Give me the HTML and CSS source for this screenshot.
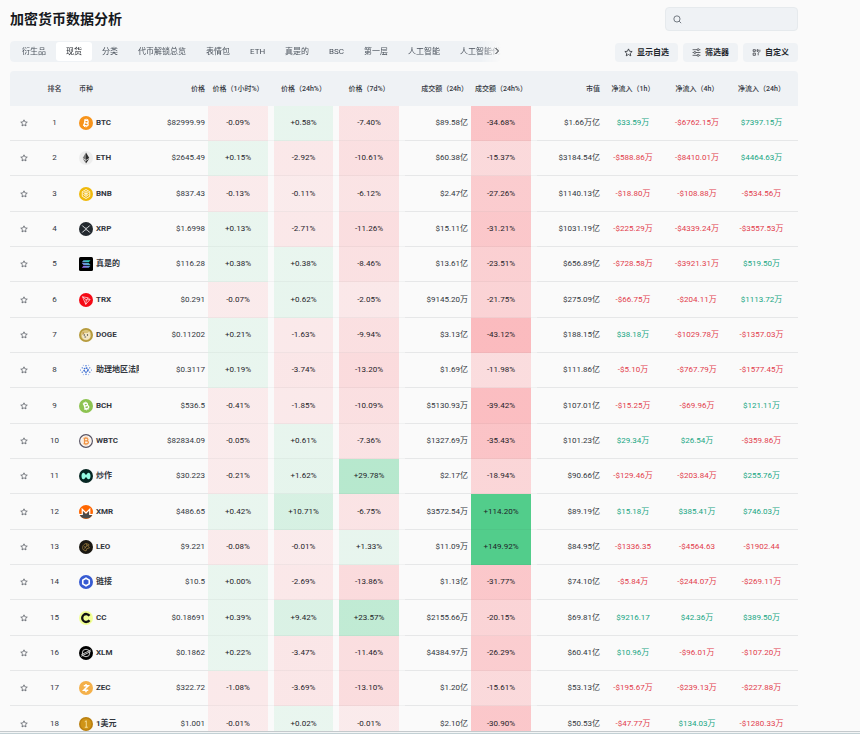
FILE: index.html
```html
<!DOCTYPE html>
<html lang="zh-CN">
<head>
<meta charset="utf-8">
<meta name="viewport" content="width=device-width, initial-scale=1">
<title>加密货币数据分析</title>
<link rel="stylesheet" href="styles.css">
</head>
<body>
<svg class="sprite" aria-hidden="true">
  <defs><linearGradient id="sol-fill" x1="0" y1="1" x2="1" y2="0"><stop offset="0" stop-color="#a855f7"/><stop offset="1" stop-color="#19e6b0"/></linearGradient></defs>
  <symbol id="star" viewBox="0 0 16 16"><path d="M8 1.6l1.9 4.2 4.6.5-3.4 3.1.9 4.5L8 11.6l-4 2.3.9-4.5L1.5 6.3l4.6-.5z" fill="none" stroke="currentColor" stroke-width="1.4" stroke-linejoin="round"/></symbol>
  <symbol id="BTC" viewBox="0 0 28 28"><circle cx="14" cy="14" r="14" fill="#f7931a"/><g transform="rotate(12 14 14)" fill="none" stroke="#fff" stroke-width="2.6"><path d="M9 8.5h6.2a2.6 2.6 0 010 5.3H11M11 8.5v11M9 19.500h7a2.800 2.800 0 000-5.700H11"/><path d="M12.500 5.500v3M15.800 5.500v3M12.500 19.500v3M15.800 19.500v3" stroke-width="1.800"/></g></symbol>
  <symbol id="ETH" viewBox="0 0 28 28"><circle cx="14" cy="14" r="14" fill="#ededed"/><path d="M14 3l-6.500 11L14 18z" fill="#777"/><path d="M14 3l6.500 11L14 18z" fill="#2c2c2c"/><path d="M7.500 15.500L14 25v-5.500z" fill="#777"/><path d="M20.500 15.500L14 25v-5.500z" fill="#222"/></symbol>
  <symbol id="BNB" viewBox="0 0 28 28"><circle cx="14" cy="14" r="14" fill="#f0b90b"/><path d="M14 5l7.500 4.300v9.400L14 23l-7.500-4.300V9.300z" fill="none" stroke="#fff3cd" stroke-width="2"/><path d="M9 11l5 3 5-3M14 14v6M11 8.700l3 1.700 3-1.700M9 15l3 2M19 15l-3 2" fill="none" stroke="#fff" stroke-width="2"/></symbol>
  <symbol id="XRP" viewBox="0 0 28 28"><circle cx="14" cy="14" r="14" fill="#23292f"/><path d="M6.500 7l4.500 4.500a4.300 4.300 0 006 0L21.500 7M6.500 21l4.500-4.500a4.300 4.300 0 016 0l4.500 4.500" fill="none" stroke="#e6e8ea" stroke-width="2"/></symbol>
  <symbol id="SOL" viewBox="0 0 28 28"><rect width="28" height="28" rx="3" fill="#000"/><path d="M9 6.500h14l-3.500 4h-14zM5.500 12h14l3.500 4H9zM9 17.500h14l-3.500 4h-14z" fill="url(#sol-fill)"/></symbol>
  <symbol id="TRX" viewBox="0 0 28 28"><circle cx="14" cy="14" r="14" fill="#f50a16"/><path d="M7 7.500l11.500 2.200 3.500 3.500-8.500 9.500zM7 7.500l7.500 6.200 4-4M14.500 13.700l7.500-.5M14.500 13.700l-1 9" fill="none" stroke="#fff" stroke-width="1.300" stroke-linejoin="round"/></symbol>
  <symbol id="DOGE" viewBox="0 0 28 28"><circle cx="14" cy="14" r="14" fill="#b59a3c"/><circle cx="14" cy="14" r="10.500" fill="#d9c27a"/><path d="M7 7l4 3h6l4-3 1.500 9c0 5-4 7.500-8 7.500S6 21 6 16z" fill="#f3e6c4"/><path d="M7 7l4 3-4 4z" fill="#b98c3a"/><circle cx="10.500" cy="14" r="1.300" fill="#333"/><circle cx="17" cy="14" r="1.300" fill="#333"/><ellipse cx="12.500" cy="18" rx="2" ry="1.400" fill="#777"/></symbol>
  <symbol id="ADA" viewBox="0 0 28 28"><circle cx="14" cy="14" r="4" fill="none" stroke="#3468d1" stroke-width="3" stroke-dasharray="3 1.200"/><g fill="#3468d1"><circle cx="14" cy="5.500" r="1.400"/><circle cx="14" cy="22.500" r="1.400"/><circle cx="6.500" cy="9.700" r="1.400"/><circle cx="21.500" cy="9.700" r="1.400"/><circle cx="6.500" cy="18.300" r="1.400"/><circle cx="21.500" cy="18.300" r="1.400"/><circle cx="3" cy="14" r="1"/><circle cx="25" cy="14" r="1"/><circle cx="8.500" cy="4.500" r=".9"/><circle cx="19.500" cy="4.500" r=".9"/><circle cx="8.500" cy="23.500" r=".9"/><circle cx="19.500" cy="23.500" r=".9"/></g></symbol>
  <symbol id="BCH" viewBox="0 0 28 28"><circle cx="14" cy="14" r="14" fill="#8dc351"/><g transform="rotate(-16 14 14)" fill="none" stroke="#fff" stroke-width="2.600"><path d="M9 8.500h6.200a2.600 2.600 0 010 5.300H11M11 8.500v11M9 19.500h7a2.800 2.800 0 000-5.700H11"/><path d="M12.500 5.500v3M15.800 5.500v3M12.500 19.500v3M15.800 19.500v3" stroke-width="1.800"/></g></symbol>
  <symbol id="WBTC" viewBox="0 0 28 28"><circle cx="14" cy="14" r="12.800" fill="#fff" stroke="#5a5564" stroke-width="2.400"/><circle cx="14" cy="14" r="10" fill="#fbeee2"/><g fill="none" stroke="#f09242" stroke-width="2.400"><path d="M9 8.500h6.200a2.600 2.600 0 010 5.300H11M11 8.500v11M9 19.500h7a2.800 2.800 0 000-5.700H11"/><path d="M12.500 5.500v3M15.800 5.500v3M12.500 19.500v3M15.800 19.500v3" stroke-width="1.600"/></g></symbol>
  <symbol id="HYPE" viewBox="0 0 28 28"><circle cx="14" cy="14" r="14" fill="#072723"/><path d="M5 14c0-4 1.500-6.500 3.800-6.500 3 0 3.200 4 5.200 4s2.200-4 5.200-4C21.500 7.500 23 10 23 14s-1.500 6.500-3.800 6.500c-3 0-3.200-4-5.200-4s-2.200 4-5.200 4C6.500 20.500 5 18 5 14z" fill="#97fce4"/></symbol>
  <symbol id="XMR" viewBox="0 0 28 28"><circle cx="14" cy="14" r="14" fill="#f60"/><path d="M1.500 19.500H8V12l6 6 6-6v7.500h6.500A14 14 0 011.500 19.500z" fill="#4c4c4c"/><path d="M0 19h6.500V8.500L14 16l7.500-7.500V19H28" fill="none" stroke="#fff" stroke-width="2.400"/></symbol>
  <symbol id="LEO" viewBox="0 0 28 28"><circle cx="14" cy="14" r="14" fill="#1b1812"/><path d="M8 19c-2-5 0-10 6-12l6 2-1 4 2 3-5 1-2 5zM10 17l8-7M11 12l3 5M15 8l1 5" fill="none" stroke="#a88642" stroke-width="1.400"/></symbol>
  <symbol id="LINK" viewBox="0 0 28 28"><circle cx="14" cy="14" r="14" fill="#375bd2"/><path d="M14 6.500l6.500 3.700v7.600L14 21.500l-6.500-3.700v-7.600z" fill="none" stroke="#fff" stroke-width="3.200"/></symbol>
  <symbol id="CC" viewBox="0 0 28 28"><circle cx="14" cy="14" r="14" fill="#f1ff93"/><path d="M21 9.500A8 8 0 1021 18.500" fill="none" stroke="#111" stroke-width="4.600"/></symbol>
  <symbol id="XLM" viewBox="0 0 28 28"><circle cx="14" cy="14" r="14" fill="#000"/><circle cx="14" cy="14" r="7.500" fill="none" stroke="#ddd" stroke-width="1.800"/><path d="M4.500 17.500l19-9.500M4.500 20.500l19-9.500" stroke="#ddd" stroke-width="1.800"/></symbol>
  <symbol id="ZEC" viewBox="0 0 28 28"><circle cx="14" cy="14" r="14" fill="#f4b04a"/><path d="M9.500 9.500h9l-9 9h9M14 6v3M14 19v3.500" fill="none" stroke="#fff" stroke-width="3"/></symbol>
  <symbol id="USD1" viewBox="0 0 28 28"><circle cx="14" cy="14" r="14" fill="#b97f10"/><circle cx="14" cy="14" r="11" fill="#cf9417"/><path d="M11.500 9.500L14.500 7.500V20.500M11.500 20.500h6" fill="none" stroke="#fbe7a8" stroke-width="1.800"/></symbol>
</svg>

<main class="page">
  <header class="top">
    <h1 class="title">加密货币数据分析</h1>
    <label class="search">
      <svg class="search-icon" viewBox="0 0 16 16" aria-hidden="true"><circle cx="7" cy="7" r="5.500"/><path d="M11 11l3.500 3.500"/></svg>
      <input class="search-input" type="search" aria-label="搜索">
    </label>
  </header>

  <div class="toolbar">
    <nav class="tabs">
      <div class="tab-list">
        <button class="tab" type="button">衍生品</button>
        <button class="tab is-active" type="button">现货</button>
        <button class="tab" type="button">分类</button>
        <button class="tab" type="button">代币解锁总览</button>
        <button class="tab" type="button">表情包</button>
        <button class="tab" type="button">ETH</button>
        <button class="tab" type="button">真是的</button>
        <button class="tab" type="button">BSC</button>
        <button class="tab" type="button">第一层</button>
        <button class="tab" type="button">人工智能</button>
        <button class="tab" type="button">人工智能代理</button>
      </div>
      <button class="tabs-next" type="button" aria-label="更多"><svg viewBox="0 0 8 8" aria-hidden="true"><path d="M2.500 1l3 3-3 3"/></svg></button>
    </nav>
    <div class="actions">
      <button class="action" type="button"><svg class="action-icon" aria-hidden="true"><use href="#star"/></svg>显示自选</button>
      <button class="action" type="button"><svg class="action-icon" viewBox="0 0 16 16" aria-hidden="true"><path d="M1 3h8M13 3h2M1 8h2M7 8h8M1 13h8M13 13h2"/><circle cx="11" cy="3" r="1.800"/><circle cx="5" cy="8" r="1.800"/><circle cx="11" cy="13" r="1.800"/></svg>筛选器</button>
      <button class="action" type="button"><svg class="action-icon" viewBox="0 0 16 16" aria-hidden="true"><path d="M2 3h4v3H2zM2 9h4v4H2zM9 3h2v3H9zM14 3v3l-3 3v4"/></svg>自定义</button>
    </div>
  </div>

  <div class="table-wrap">
    <table class="coins">
      <colgroup>
        <col class="c-star"><col class="c-rank"><col class="c-coin"><col class="c-price">
        <col class="c-std"><col class="c-day"><col class="c-std"><col class="c-std"><col class="c-std"><col class="c-std">
        <col class="c-in1"><col class="c-in4"><col class="c-in24">
      </colgroup>
      <thead>
        <tr>
          <th></th><th>排名</th><th class="coin">币种</th><th class="num">价格</th>
          <th class="heat">价格（1小时%）</th><th class="heat">价格（24h%）</th><th class="heat">价格（7d%）</th>
          <th class="num">成交额（24h）</th><th class="heat">成交额（24h%）</th><th class="num">市值</th>
          <th>净流入（1h）</th><th>净流入（4h）</th><th class="last">净流入（24h）</th>
        </tr>
      </thead>
      <tbody id="rows"></tbody>
    </table>
  </div>
</main>
<footer class="edge"></footer>
<script src="app.js"></script>
</body>
</html>
```
FILE: styles.css
```css
* {
  box-sizing: border-box;
}

body {
  margin: 0;
  height: 100vh;
  display: flex;
  flex-direction: column;
  overflow: hidden;
  background: #fafafa;
  color: #33373e;
  font-family: Roboto, "Noto Sans CJK SC", sans-serif;
  font-size: 8px;
  line-height: 12px;
}

button,
input {
  margin: 0;
  padding: 0;
  border: 0;
  background: none;
  color: inherit;
  font: inherit;
}

.sprite {
  position: absolute;
  width: 0;
  height: 0;
}

.page {
  flex: 1;
  min-height: 0;
  display: flex;
  flex-direction: column;
  padding: 7px 62px 0 10px;
}

.top {
  display: flex;
  align-items: center;
  justify-content: space-between;
}

.title {
  margin: 0;
  color: #16181c;
  font-size: 14px;
  font-weight: 700;
  line-height: 24px;
}

.search {
  display: flex;
  align-items: center;
  width: 133px;
  height: 24px;
  padding: 0 7px;
  border: 1px solid #e6eaed;
  border-radius: 4px;
  background: #eff2f5;
}

.search-icon {
  width: 9px;
  height: 9px;
  flex: none;
  fill: none;
  stroke: #5d646d;
  stroke-width: 1.5;
}

.search-input {
  flex: 1;
  min-width: 0;
  padding-left: 6px;
  outline: 0;
}

.toolbar {
  display: flex;
  justify-content: space-between;
  gap: 114px;
  margin: 10px 0 9px;
}

.tabs {
  position: relative;
  flex: 1;
  min-width: 0;
  height: 21px;
  color: #4a525c;
}

.tab-list {
  display: flex;
  height: 21px;
  padding: 1px 2px;
  overflow: hidden;
  border-radius: 4px;
  background: #eff2f5;
  mask-image: linear-gradient(to right, #000 calc(100% - 20px), transparent);
}

.tab {
  flex: none;
  padding: 0 10px;
  border-radius: 3px;
}

.tab.is-active {
  background: #fff;
  color: #22262c;
}

.tabs-next {
  position: absolute;
  top: 6px;
  right: 0;
  width: 8px;
  height: 8px;
}

.tabs-next svg {
  display: block;
  fill: none;
  stroke: #22262c;
}

.actions {
  display: flex;
  gap: 5px;
  padding-top: 2px;
}

.action {
  display: flex;
  align-items: center;
  gap: 4px;
  height: 19px;
  padding: 0 9px;
  border-radius: 4px;
  background: #eff2f5;
  color: #22262c;
  font-weight: 700;
}

.action-icon {
  width: 9px;
  height: 9px;
  fill: none;
  stroke: currentColor;
  stroke-width: 1.2;
}

.table-wrap {
  flex: 1;
  min-height: 0;
  overflow: hidden;
}

.coins {
  width: 100%;
  table-layout: fixed;
  border-spacing: 0;
}

.c-star { width: 27px; }
.c-rank { width: 35px; }
.c-coin,
.c-price,
.c-in4 { width: 68px; }
.c-std { width: 66px; }
.c-day { width: 65px; }
.c-in1 { width: 60px; }
.c-in24 { width: 67px; }

.coins th,
.coins td {
  padding: 0;
  text-align: center;
  vertical-align: middle;
  white-space: nowrap;
}

.coins th {
  height: 35px;
  background: #eff2f5;
  font-size: 7px;
  font-weight: 500;
}

.coins th:first-child {
  border-radius: 4px 0 0 0;
}

.coins th:last-child {
  border-radius: 0 4px 0 0;
}

.coins td {
  height: 35px;
  border-bottom: 1px solid rgba(60, 70, 80, 0.1);
}

.coins tr:nth-child(3n) td {
  height: 36px;
}

.coins .coin {
  padding-left: 7px;
  text-align: left;
}

.coins .num {
  padding-right: 3px;
  text-align: right;
}

.coins .heat {
  padding-right: 6px;
}

.coins td.heat {
  border-bottom-color: rgba(60, 70, 80, 0.05);
  background-image: linear-gradient(var(--heat), var(--heat));
  background-origin: border-box;
  background-repeat: no-repeat;
  background-size: calc(100% - 6px) 100%;
  color: #1f2329;
}

.coins .last {
  padding-right: 6px;
}

.coins .up { color: #18a683; }
.coins .down { color: #e23c4c; }

.fav {
  display: block;
  width: 8px;
  height: 8px;
  margin: 0 auto;
  color: #4a4f57;
}

.fav svg {
  display: block;
  width: 8px;
  height: 8px;
}

.coin-box {
  display: flex;
  align-items: center;
  gap: 3px;
  margin-right: 1px;
  overflow: hidden;
  font-weight: 700;
}

.coin-icon {
  flex: none;
  width: 14px;
  height: 14px;
}

.edge {
  height: 3px;
  border-top: 1px solid #c4c9cc;
  border-bottom: 1px solid #c3d0d4;
  background: #f3f5f6;
}
```
FILE: app.js
```js
// icon, name, price, 1h %, 24h %, 7d %, volume, volume %, market cap, net inflow 1h / 4h / 24h
const coins = [
  ["BTC", "BTC", "$82999.99", "-0.09", "+0.58", "-7.40", "$89.58亿", "-34.68", "$1.66万亿", "$33.59万", "-$6762.15万", "$7397.15万"],
  ["ETH", "ETH", "$2645.49", "+0.15", "-2.92", "-10.61", "$60.38亿", "-15.37", "$3184.54亿", "-$588.86万", "-$8410.01万", "$4464.63万"],
  ["BNB", "BNB", "$837.43", "-0.13", "-0.11", "-6.12", "$2.47亿", "-27.26", "$1140.13亿", "-$18.80万", "-$108.88万", "-$534.56万"],
  ["XRP", "XRP", "$1.6998", "+0.13", "-2.71", "-11.26", "$15.11亿", "-31.21", "$1031.19亿", "-$225.29万", "-$4339.24万", "-$3557.53万"],
  ["SOL", "真是的", "$116.28", "+0.38", "+0.38", "-8.46", "$13.61亿", "-23.51", "$656.89亿", "-$728.58万", "-$3921.31万", "$519.50万"],
  ["TRX", "TRX", "$0.291", "-0.07", "+0.62", "-2.05", "$9145.20万", "-21.75", "$275.09亿", "-$66.75万", "-$204.11万", "$1113.72万"],
  ["DOGE", "DOGE", "$0.11202", "+0.21", "-1.63", "-9.94", "$3.13亿", "-43.12", "$188.15亿", "$38.18万", "-$1029.78万", "-$1357.03万"],
  ["ADA", "助理地区法院", "$0.3117", "+0.19", "-3.74", "-13.20", "$1.69亿", "-11.98", "$111.86亿", "-$5.10万", "-$767.79万", "-$1577.45万"],
  ["BCH", "BCH", "$536.5", "-0.41", "-1.85", "-10.09", "$5130.93万", "-39.42", "$107.01亿", "-$15.25万", "-$69.96万", "$121.11万"],
  ["WBTC", "WBTC", "$82834.09", "-0.05", "+0.61", "-7.36", "$1327.69万", "-35.43", "$101.23亿", "$29.34万", "$26.54万", "-$359.86万"],
  ["HYPE", "炒作", "$30.223", "-0.21", "+1.62", "+29.78", "$2.17亿", "-18.94", "$90.66亿", "-$129.46万", "-$203.84万", "$255.76万"],
  ["XMR", "XMR", "$486.65", "+0.42", "+10.71", "-6.75", "$3572.54万", "+114.20", "$89.19亿", "$15.18万", "$385.41万", "$746.03万"],
  ["LEO", "LEO", "$9.221", "-0.08", "-0.01", "+1.33", "$11.09万", "+149.92", "$84.95亿", "-$1336.35", "-$4564.63", "-$1902.44"],
  ["LINK", "链接", "$10.5", "+0.00", "-2.69", "-13.86", "$1.13亿", "-31.77", "$74.10亿", "-$5.84万", "-$244.07万", "-$269.11万"],
  ["CC", "CC", "$0.18691", "+0.39", "+9.42", "+23.57", "$2155.66万", "-20.15", "$69.81亿", "$9216.17", "$42.36万", "$389.50万"],
  ["XLM", "XLM", "$0.1862", "+0.22", "-3.47", "-11.46", "$4384.97万", "-26.29", "$60.41亿", "$10.96万", "-$96.01万", "-$107.20万"],
  ["ZEC", "ZEC", "$322.72", "-1.08", "-3.69", "-13.10", "$1.20亿", "-15.61", "$53.13亿", "-$195.67万", "-$239.13万", "-$227.88万"],
  ["USD1", "1美元", "$1.001", "-0.01", "+0.02", "-0.01", "$2.10亿", "-30.90", "$50.53亿", "-$47.77万", "$134.03万", "-$1280.33万"]
];

// The larger the change, the stronger the tint.
function tint(text) {
  const size = Math.abs(parseFloat(text));
  return text[0] === "+"
    ? `rgba(82, 205, 139, ${Math.min(1, 0.1 + size * 0.01).toFixed(2)})`
    : `rgba(252, 110, 118, ${Math.min(1, 0.11 + size * 0.008).toFixed(2)})`;
}

const num = (v) => `<td class="num">${v}</td>`;
const heat = (v) => `<td class="heat" style="--heat: ${tint(v)}">${v}%</td>`;
const flow = (v, last) => `<td class="${v[0] === "-" ? "down" : "up"}${last ? " last" : ""}">${v}</td>`;

document.getElementById("rows").innerHTML = coins.map((c, i) => `
  <tr>
    <td><button class="fav" type="button" aria-label="收藏 ${c[1]}"><svg aria-hidden="true"><use href="#star"/></svg></button></td>
    <td>${i + 1}</td>
    <td class="coin"><div class="coin-box"><svg class="coin-icon" aria-hidden="true"><use href="#${c[0]}"/></svg>${c[1]}</div></td>
    ${num(c[2])}${heat(c[3])}${heat(c[4])}${heat(c[5])}${num(c[6])}${heat(c[7])}${num(c[8])}
    ${flow(c[9])}${flow(c[10])}${flow(c[11], true)}
  </tr>`).join("");
```
